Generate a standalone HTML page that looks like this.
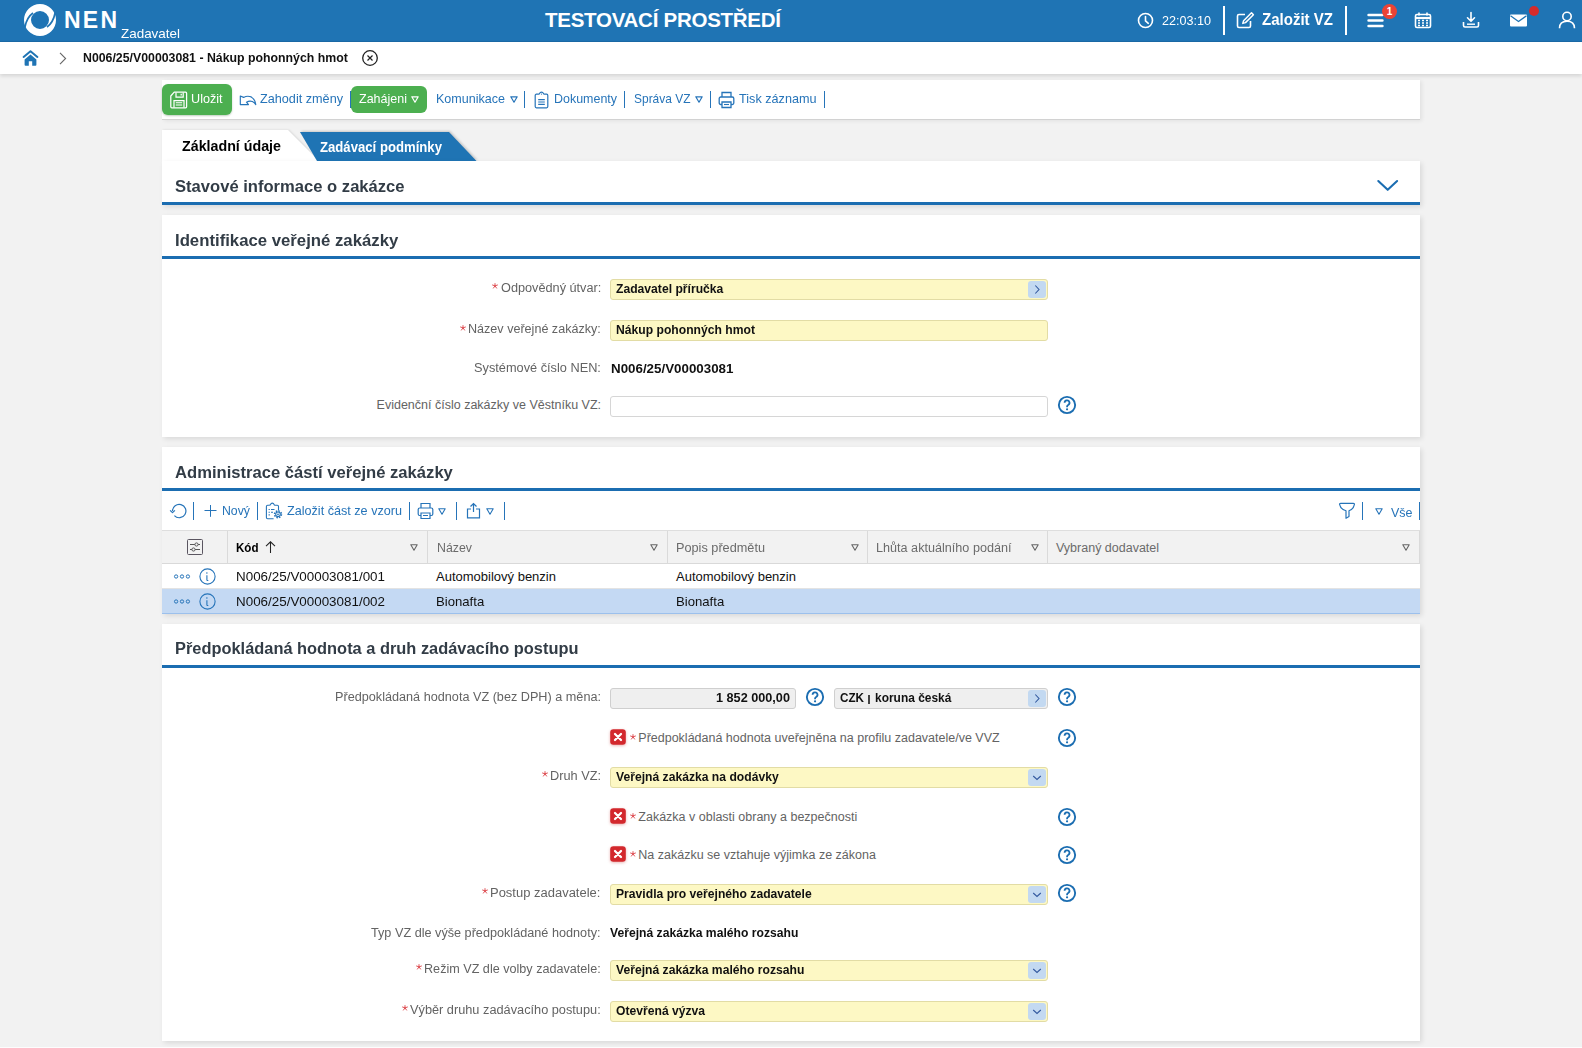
<!DOCTYPE html>
<html><head><meta charset="utf-8"><title>NEN</title>
<style>
html,body{margin:0;padding:0;}
body{width:1582px;height:1048px;overflow:hidden;position:relative;background:#f2f2f2;font-family:"Liberation Sans",sans-serif;}
.t{position:absolute;white-space:nowrap;line-height:1;}
.r{position:absolute;}
svg.r{overflow:visible;}
</style></head><body>
<div class="r" style="left:0px;top:0px;width:1582px;height:42px;background:#1f74b4;"></div>
<div class="r" style="left:0px;top:41px;width:1582px;height:1px;background:#1a6aa6;"></div>
<svg class="r" style="left:22px;top:2px;" width="36" height="36" viewBox="0 0 36 36" fill="none"><circle cx="18" cy="18" r="12.5" stroke="#fff" stroke-width="7"/>
<path d="M11 11 Q4.8 15.2 2.8 25.5" stroke="#1f74b4" stroke-width="1.7"/>
<path d="M25 25 Q31.2 20.8 33.2 10.5" stroke="#1f74b4" stroke-width="1.7"/></svg>
<div class="t" style="left:64.00px;top:8.53px;font-size:23.00px;color:#fff;font-weight:bold;letter-spacing:2.219px;">NEN</div>
<div class="t" style="left:121.00px;top:26.50px;font-size:13.00px;color:#fff;transform:scaleX(1.0334);transform-origin:0 0;">Zadavatel</div>
<div class="t" style="left:545.00px;top:10.45px;font-size:20.50px;color:#fff;font-weight:bold;letter-spacing:-0.262px;">TESTOVACÍ PROSTŘEDÍ</div>
<svg class="r" style="left:1137px;top:12px;" width="17" height="17" viewBox="0 0 17 17" fill="none"><circle cx="8.5" cy="8.5" r="7" stroke="#fff" stroke-width="1.6"/><path d="M8.5 4.5 V8.8 L11.3 11.3" stroke="#fff" stroke-width="1.6" stroke-linecap="round"/></svg>
<div class="t" style="left:1162.00px;top:13.87px;font-size:13.50px;color:#fff;transform:scaleX(0.9324);transform-origin:0 0;">22:03:10</div>
<div class="r" style="left:1223px;top:6px;width:2px;height:29px;background:#fff;"></div>
<svg class="r" style="left:1236px;top:11px;" width="19" height="18" viewBox="0 0 19 18" fill="none"><path d="M9 3.5 H3 a1.5 1.5 0 0 0 -1.5 1.5 V15 a1.5 1.5 0 0 0 1.5 1.5 H13 a1.5 1.5 0 0 0 1.5 -1.5 V10" stroke="#fff" stroke-width="1.6"/><path d="M15.5 1.8 L17.4 3.7 L9.5 11.6 L6.8 12.4 L7.6 9.7 Z" stroke="#fff" stroke-width="1.5" stroke-linejoin="round"/></svg>
<div class="t" style="left:1262.00px;top:11.76px;font-size:16.00px;color:#fff;font-weight:bold;transform:scaleX(0.9397);transform-origin:0 0;">Založit VZ</div>
<div class="r" style="left:1345px;top:6px;width:2px;height:29px;background:#fff;"></div>
<svg class="r" style="left:1366px;top:13px;" width="18" height="15" viewBox="0 0 18 15" fill="none"><path d="M2.6 2 H16.4 M2.6 7.5 H16.4 M2.6 13 H16.4" stroke="#fff" stroke-width="2.6" stroke-linecap="round"/></svg>
<div class="r" style="left:1382px;top:4px;width:15px;height:15px;background:#ea4335;border-radius:50%;"></div>
<div class="t" style="left:1386.72px;top:7.34px;font-size:10.00px;color:#fff;font-weight:bold;">1</div>
<svg class="r" style="left:1414px;top:11px;" width="18" height="18" viewBox="0 0 18 18" fill="none"><rect x="1.5" y="3.5" width="15" height="13" rx="1.5" stroke="#fff" stroke-width="1.6"/><path d="M1.5 7 H16.5" stroke="#fff" stroke-width="2.2"/><path d="M5 1.5 V4.5 M13 1.5 V4.5" stroke="#fff" stroke-width="1.6"/><path d="M4 9.5h2M8 9.5h2M12 9.5h2M4 12h2M8 12h2M12 12h2M4 14.5h2M8 14.5h2M12 14.5h2" stroke="#fff" stroke-width="1.3"/></svg>
<svg class="r" style="left:1462px;top:11px;" width="18" height="18" viewBox="0 0 18 18" fill="none"><path d="M9 1.5 V10 M5.5 6.8 L9 10.3 L12.5 6.8" stroke="#fff" stroke-width="1.6" stroke-linecap="round" stroke-linejoin="round"/><path d="M1.5 11 V14.5 a1.5 1.5 0 0 0 1.5 1.5 H15 a1.5 1.5 0 0 0 1.5 -1.5 V11" stroke="#fff" stroke-width="1.6"/><path d="M5 13.2 H13" stroke="#fff" stroke-width="1.4"/></svg>
<svg class="r" style="left:1509px;top:14px;" width="19" height="13" viewBox="0 0 19 13" fill="none"><path d="M1 1.5 a1 1 0 0 1 1 -1 H17 a1 1 0 0 1 1 1 V11.5 a1 1 0 0 1 -1 1 H2 a1 1 0 0 1 -1 -1 Z" fill="#fff"/><path d="M1.5 1.8 L9.5 7.5 L17.5 1.8" stroke="#1f74b4" stroke-width="1.3"/></svg>
<div class="r" style="left:1529px;top:6px;width:10px;height:10px;background:#d52b2b;border-radius:50%;"></div>
<svg class="r" style="left:1558px;top:11px;" width="18" height="18" viewBox="0 0 18 18" fill="none"><circle cx="9" cy="5.5" r="4.2" stroke="#fff" stroke-width="1.6"/><path d="M1.5 17.2 C1.5 12.5 4.5 10.3 9 10.3 C13.5 10.3 16.5 12.5 16.5 17.2" stroke="#fff" stroke-width="1.6"/></svg>
<div class="r" style="left:0px;top:42px;width:1582px;height:32px;background:#fff;box-shadow:0 2px 4px rgba(0,0,0,0.13);z-index:2;"></div>
<svg class="r" style="left:21.5px;top:49px;z-index:3;" width="17" height="17" viewBox="0 0 17 17" fill="none"><path d="M1.6 7.9 L8.5 2.2 L15.4 7.9" stroke="#1f74b4" stroke-width="2" stroke-linecap="round" stroke-linejoin="round"/><path d="M2.6 10.4 L8.5 5.4 L14.4 10.4 V15.8 a0.9 0.9 0 0 1 -0.9 0.9 H10.2 V12.2 H6.8 V16.7 H3.5 a0.9 0.9 0 0 1 -0.9 -0.9 Z" fill="#1f74b4"/></svg>
<svg class="r" style="left:58px;top:52px;z-index:3;" width="10" height="13" viewBox="0 0 10 13" fill="none"><path d="M2 0.8 L7.6 6.5 L2 12.2" stroke="#666" stroke-width="1.1"/></svg>
<div class="t" style="left:83.00px;top:50.86px;font-size:13.40px;color:#111;font-weight:bold;transform:scaleX(0.9195);transform-origin:0 0;z-index:3;">N006/25/V00003081 - Nákup pohonných hmot</div>
<svg class="r" style="left:361px;top:49px;z-index:3;" width="18" height="18" viewBox="0 0 18 18" fill="none"><circle cx="9" cy="9" r="7.3" stroke="#222" stroke-width="1.3"/><path d="M6.5 6.5 L11.5 11.5 M11.5 6.5 L6.5 11.5" stroke="#222" stroke-width="1.2"/></svg>
<div class="r" style="left:162px;top:80px;width:1258px;height:40px;background:#fff;border-bottom:1px solid #d2d2d2;box-sizing:border-box;box-shadow:2px 1px 4px rgba(0,0,0,0.07);"></div>
<div class="r" style="left:162px;top:84px;width:70px;height:31px;background:#4caf50;border-radius:6px;box-shadow:0 1px 2px rgba(0,60,0,0.25);"></div>
<svg class="r" style="left:170px;top:91px;" width="18" height="18" viewBox="0 0 18 18" fill="none"><path d="M4.2 1.2 H15.6 a1 1 0 0 1 1 1 V15.8 a1 1 0 0 1 -1 1 H1.8 a1 1 0 0 1 -1 -1 V5 Z" stroke="#fff" stroke-width="1.25" stroke-linejoin="round"/><path d="M6 1.5 V6.2 H13.2 V1.5" stroke="#fff" stroke-width="1.2"/><path d="M11.2 2.8 V4.6" stroke="#fff" stroke-width="1.3"/><path d="M4 16.6 V9.6 H14 V16.6" stroke="#fff" stroke-width="1.2"/><path d="M5.8 11.8 H12.2 M5.8 14 H12.2" stroke="#fff" stroke-width="1.1"/></svg>
<div class="t" style="left:191.00px;top:91.60px;font-size:13.00px;color:#fff;transform:scaleX(0.9721);transform-origin:0 0;">Uložit</div>
<svg class="r" style="left:239px;top:91px;" width="18" height="17" viewBox="0 0 18 17" fill="none"><path d="M1.3 5 V13.6 H9.5 L7.5 11.2 Q10.6 9.3 13.4 10.6 Q15.6 11.7 16.8 13.6 Q16.2 8.2 12.2 5.9 Q8.4 4.3 4.6 6.4 Z" stroke="#2674b9" stroke-width="1.15" stroke-linejoin="round"/></svg>
<div class="t" style="left:260.00px;top:92.17px;font-size:13.50px;color:#2674b9;transform:scaleX(0.9374);transform-origin:0 0;">Zahodit změny</div>
<div class="r" style="left:350px;top:91px;width:1.5px;height:17px;background:#2674b9;"></div>
<div class="r" style="left:351px;top:86px;width:76px;height:27px;background:#4caf50;border-radius:6px;"></div>
<div class="t" style="left:359.00px;top:92.17px;font-size:13.50px;color:#fff;transform:scaleX(0.9269);transform-origin:0 0;">Zahájeni</div>
<svg class="r" style="left:411px;top:96px;" width="8" height="7" viewBox="0 0 8 7" fill="none"><path d="M0.8 0.8 H7.2 L4 6.2 Z" stroke="#fff" stroke-width="1.2" stroke-linejoin="round"/></svg>
<div class="t" style="left:436.00px;top:92.17px;font-size:13.50px;color:#2674b9;transform:scaleX(0.9288);transform-origin:0 0;">Komunikace</div>
<svg class="r" style="left:510px;top:96px;" width="8" height="7" viewBox="0 0 8 7" fill="none"><path d="M0.8 0.8 H7.2 L4 6.2 Z" stroke="#2674b9" stroke-width="1.2" stroke-linejoin="round"/></svg>
<div class="r" style="left:524px;top:91px;width:1px;height:17px;background:#2674b9;"></div>
<svg class="r" style="left:534px;top:91px;" width="15" height="18" viewBox="0 0 15 18" fill="none"><path d="M4.6 3.2 H2.4 a1.2 1.2 0 0 0 -1.2 1.2 V15.6 a1.2 1.2 0 0 0 1.2 1.2 H12.6 a1.2 1.2 0 0 0 1.2 -1.2 V4.4 a1.2 1.2 0 0 0 -1.2 -1.2 H10.4 Q9.6 3.2 9.4 2.4 Q8.9 1.1 7.5 1.1 Q6.1 1.1 5.6 2.4 Q5.4 3.2 4.6 3.2 Z" stroke="#2674b9" stroke-width="1.2" stroke-linejoin="round"/><circle cx="7.5" cy="3.1" r="0.6" fill="#2674b9"/><path d="M4.2 8.6 H10.8 M4.2 11 H10.8 M4.2 13.4 H10.8" stroke="#2674b9" stroke-width="1.1"/></svg>
<div class="t" style="left:554.00px;top:92.17px;font-size:13.50px;color:#2674b9;transform:scaleX(0.9227);transform-origin:0 0;">Dokumenty</div>
<div class="r" style="left:624px;top:91px;width:1px;height:17px;background:#2674b9;"></div>
<div class="t" style="left:633.50px;top:92.17px;font-size:13.50px;color:#2674b9;transform:scaleX(0.8859);transform-origin:0 0;">Správa VZ</div>
<svg class="r" style="left:695px;top:96px;" width="8" height="7" viewBox="0 0 8 7" fill="none"><path d="M0.8 0.8 H7.2 L4 6.2 Z" stroke="#2674b9" stroke-width="1.2" stroke-linejoin="round"/></svg>
<div class="r" style="left:710px;top:91px;width:1px;height:17px;background:#2674b9;"></div>
<svg class="r" style="left:718px;top:91px;" width="17" height="18" viewBox="0 0 17 18" fill="none"><path d="M4 6 V1.5 H13 V6" stroke="#2674b9" stroke-width="1.3"/><rect x="1.2" y="6" width="14.6" height="7.5" rx="1.5" stroke="#2674b9" stroke-width="1.3"/><path d="M4 11 V16.5 H13 V11 Z" stroke="#2674b9" stroke-width="1.3" fill="#fff"/><path d="M6 13.5 H11" stroke="#2674b9" stroke-width="1.1"/></svg>
<div class="t" style="left:739.00px;top:92.17px;font-size:13.50px;color:#2674b9;transform:scaleX(0.9363);transform-origin:0 0;">Tisk záznamu</div>
<div class="r" style="left:824px;top:91px;width:1px;height:17px;background:#2674b9;"></div>
<svg class="r" style="left:162px;top:129px;filter:drop-shadow(1px 0 1px rgba(0,0,0,0.12));" width="160" height="33" viewBox="0 0 160 33" fill="none"><path d="M0 1 H126 L157.5 32.5 H0 Z" fill="#fff"/></svg>
<div class="t" style="left:182.00px;top:138.73px;font-size:14.50px;color:#000;font-weight:bold;transform:scaleX(0.9829);transform-origin:0 0;">Základní údaje</div>
<svg class="r" style="left:298px;top:132px;filter:drop-shadow(1px -1px 1px rgba(0,0,0,0.18));" width="182" height="29" viewBox="0 0 182 29" fill="none"><path d="M2 0 H151 L178.5 29 H19 Z" fill="#1f74b4"/></svg>
<div class="t" style="left:319.50px;top:140.52px;font-size:13.80px;color:#fff;font-weight:bold;transform:scaleX(0.9526);transform-origin:0 0;">Zadávací podmínky</div>
<div class="r" style="left:162px;top:161px;width:1258px;height:44px;background:#fff;box-shadow:2px 2px 5px rgba(0,0,0,0.10);"></div>
<div class="r" style="left:162px;top:202px;width:1258px;height:3px;background:#1b6db1;"></div>
<div class="t" style="left:174.50px;top:178.17px;font-size:17.40px;color:#323c46;font-weight:bold;transform:scaleX(0.9538);transform-origin:0 0;">Stavové informace o zakázce</div>
<svg class="r" style="left:1376px;top:179px;" width="23" height="14" viewBox="0 0 23 14" fill="none"><path d="M2.3 2 L11.7 10.8 L21.1 2" stroke="#1b6db1" stroke-width="2.1" stroke-linecap="round" stroke-linejoin="round"/></svg>
<div class="r" style="left:162px;top:215px;width:1258px;height:222px;background:#fff;box-shadow:2px 2px 5px rgba(0,0,0,0.10);"></div>
<div class="r" style="left:162px;top:256px;width:1258px;height:3px;background:#1b6db1;"></div>
<div class="t" style="left:174.50px;top:231.97px;font-size:17.40px;color:#323c46;font-weight:bold;transform:scaleX(0.9624);transform-origin:0 0;">Identifikace veřejné zakázky</div>
<div class="r" style="left:162px;top:447px;width:1258px;height:167px;background:#fff;box-shadow:2px 2px 5px rgba(0,0,0,0.10);"></div>
<div class="r" style="left:162px;top:488px;width:1258px;height:3px;background:#1b6db1;"></div>
<div class="t" style="left:174.50px;top:463.77px;font-size:17.40px;color:#323c46;font-weight:bold;transform:scaleX(0.9549);transform-origin:0 0;">Administrace částí veřejné zakázky</div>
<div class="r" style="left:162px;top:624px;width:1258px;height:417px;background:#fff;box-shadow:2px 2px 5px rgba(0,0,0,0.10);"></div>
<div class="r" style="left:162px;top:665px;width:1258px;height:3px;background:#1b6db1;"></div>
<div class="t" style="left:174.50px;top:640.47px;font-size:17.40px;color:#323c46;font-weight:bold;transform:scaleX(0.9426);transform-origin:0 0;">Předpokládaná hodnota a druh zadávacího postupu</div>
<div class="t" style="left:500.50px;top:281.52px;font-size:12.50px;color:#636363;transform:scaleX(1.0165);transform-origin:0 0;">Odpovědný útvar:</div>
<svg class="r" style="left:492.3999999999999px;top:282.90000000000003px;" width="6" height="6" viewBox="0 0 6 6" fill="none"><path d="M3 2.9 V0.2 M3 2.9 L0.2 1.9 M3 2.9 L5.8 1.9 M3 2.9 L1.2 5.4 M3 2.9 L4.8 5.4" stroke="#d9343a" stroke-width="0.85"/></svg>
<div class="r" style="left:610px;top:279px;width:438px;height:21px;background:#fdf8c4;border:1px solid #e2dca5;border-radius:3px;box-sizing:border-box;"></div>
<div class="r" style="left:1028px;top:281px;width:18px;height:17px;background:#c3d9f1;border-radius:3px;"></div>
<svg class="r" style="left:1028px;top:281px;" width="18" height="17" viewBox="0 0 18 17" fill="none"><path d="M7.3 4.5 L11 8.5 L7.3 12.5" stroke="#33599f" stroke-width="1.1"/></svg>
<div class="t" style="left:615.50px;top:283.43px;font-size:12.60px;color:#111;font-weight:bold;transform:scaleX(0.9643);transform-origin:0 0;">Zadavatel příručka</div>
<div class="t" style="left:468.00px;top:323.42px;font-size:12.50px;color:#636363;transform:scaleX(1.0060);transform-origin:0 0;">Název veřejné zakázky:</div>
<svg class="r" style="left:459.8999999999999px;top:324.8px;" width="6" height="6" viewBox="0 0 6 6" fill="none"><path d="M3 2.9 V0.2 M3 2.9 L0.2 1.9 M3 2.9 L5.8 1.9 M3 2.9 L1.2 5.4 M3 2.9 L4.8 5.4" stroke="#d9343a" stroke-width="0.85"/></svg>
<div class="r" style="left:610px;top:320px;width:438px;height:21px;background:#fdf8c4;border:1px solid #e2dca5;border-radius:3px;box-sizing:border-box;"></div>
<div class="t" style="left:615.50px;top:324.43px;font-size:12.60px;color:#111;font-weight:bold;transform:scaleX(0.9643);transform-origin:0 0;">Nákup pohonných hmot</div>
<div class="t" style="left:473.90px;top:362.42px;font-size:12.50px;color:#636363;transform:scaleX(1.0206);transform-origin:0 0;">Systémové číslo NEN:</div>
<div class="t" style="left:610.50px;top:362.63px;font-size:12.60px;color:#111;font-weight:bold;transform:scaleX(1.0596);transform-origin:0 0;">N006/25/V00003081</div>
<div class="t" style="left:376.60px;top:399.42px;font-size:12.50px;color:#636363;">Evidenční číslo zakázky ve Věstníku VZ:</div>
<div class="r" style="left:610px;top:396px;width:438px;height:21px;background:#fff;border:1px solid #d6d6d6;border-radius:3px;box-sizing:border-box;"></div>
<svg class="r" style="left:1057px;top:394.90000000000003px;" width="20" height="20" viewBox="0 0 20 20" fill="none"><circle cx="10" cy="10" r="8.15" stroke="#1b6db1" stroke-width="1.9"/><path d="M7.6 7.8 a2.45 2.45 0 1 1 3.55 2.2 c-0.78 0.4 -1.1 0.88 -1.1 1.75 V12.2" stroke="#1b6db1" stroke-width="1.8" fill="none"/><circle cx="10.05" cy="14.3" r="1.1" fill="#1b6db1"/></svg>
<svg class="r" style="left:169px;top:503px;" width="18" height="17" viewBox="0 0 18 17" fill="none"><path d="M3.5 8 A6.7 6.7 0 1 1 5.4 12.7" stroke="#2674b9" stroke-width="1.2"/><path d="M1.1 7.3 L3.5 9.7 L5.9 7.3" stroke="#2674b9" stroke-width="1.2" stroke-linejoin="round"/></svg>
<div class="r" style="left:193px;top:502px;width:1px;height:18px;background:#2674b9;"></div>
<svg class="r" style="left:203px;top:504px;" width="14" height="14" viewBox="0 0 14 14" fill="none"><path d="M7.5 1 V12.8 M1.5 6.5 H13.5" stroke="#2674b9" stroke-width="1"/></svg>
<div class="t" style="left:222.00px;top:503.70px;font-size:13.00px;color:#2674b9;transform:scaleX(0.9453);transform-origin:0 0;">Nový</div>
<div class="r" style="left:257px;top:502px;width:1px;height:18px;background:#2674b9;"></div>
<svg class="r" style="left:265px;top:502px;" width="18" height="18" viewBox="0 0 18 18" fill="none"><path d="M4.2 3.2 H2.6 a1.2 1.2 0 0 0 -1.2 1.2 V15.6 a1.2 1.2 0 0 0 1.2 1.2 H8.6 M13.5 8.5 V4.4 a1.2 1.2 0 0 0 -1.2 -1.2 H10 Q9.2 3.2 9 2.4 Q8.6 1.1 7.3 1.1 Q6 1.1 5.6 2.4 Q5.4 3.2 4.2 3.2" stroke="#2674b9" stroke-width="1.1" stroke-linejoin="round"/><path d="M3.6 7.5 H4.8 M6 7.5 H9.5 M3.6 10.2 H4.8 M6 10.2 H8 M3.6 12.9 H4.8" stroke="#2674b9" stroke-width="1.1"/><circle cx="13" cy="12.3" r="3.4" stroke="#2674b9" stroke-width="1.6" stroke-dasharray="1.5 1.17" fill="#fff"/><circle cx="13" cy="12.3" r="2.3" stroke="#2674b9" stroke-width="1.05" fill="#fff"/><circle cx="13" cy="12.3" r="0.9" fill="#2674b9"/></svg>
<div class="t" style="left:286.50px;top:503.50px;font-size:13.00px;color:#2674b9;transform:scaleX(0.9706);transform-origin:0 0;">Založit část ze vzoru</div>
<div class="r" style="left:409px;top:502px;width:1px;height:18px;background:#2674b9;"></div>
<svg class="r" style="left:417px;top:502px;" width="17" height="18" viewBox="0 0 17 18" fill="none"><path d="M4 6 V1.5 H13 V6" stroke="#2674b9" stroke-width="1.2"/><rect x="1.2" y="6" width="14.6" height="7.5" rx="1.5" stroke="#2674b9" stroke-width="1.2"/><path d="M4 11 V16.5 H13 V11 Z" stroke="#2674b9" stroke-width="1.2" fill="#fff"/><path d="M6 13.5 H11" stroke="#2674b9" stroke-width="1"/></svg>
<svg class="r" style="left:438px;top:508px;" width="8" height="7" viewBox="0 0 8 7" fill="none"><path d="M0.8 0.8 H7.2 L4 6.2 Z" stroke="#2674b9" stroke-width="1.1" stroke-linejoin="round"/></svg>
<div class="r" style="left:456px;top:502px;width:1px;height:18px;background:#2674b9;"></div>
<svg class="r" style="left:466px;top:502px;" width="15" height="17" viewBox="0 0 15 17" fill="none"><path d="M7.5 1.5 V10 M4.5 4.5 L7.5 1.5 L10.5 4.5" stroke="#2674b9" stroke-width="1.2"/><path d="M5 7 H1.5 V15.8 H13.5 V7 H10" stroke="#2674b9" stroke-width="1.2"/></svg>
<svg class="r" style="left:486px;top:508px;" width="8" height="7" viewBox="0 0 8 7" fill="none"><path d="M0.8 0.8 H7.2 L4 6.2 Z" stroke="#2674b9" stroke-width="1.1" stroke-linejoin="round"/></svg>
<div class="r" style="left:504px;top:502px;width:1px;height:18px;background:#2674b9;"></div>
<svg class="r" style="left:1338px;top:502px;" width="18" height="18" viewBox="0 0 18 18" fill="none"><path d="M1.6 2.4 Q1.4 1.3 2.6 1.3 H15.4 Q16.6 1.3 16.4 2.4 Q15.6 7 11 8.8 V14.6 L8 16.3 V8.8 Q2.4 7 1.6 2.4 Z" stroke="#2674b9" stroke-width="1.2" stroke-linejoin="round"/></svg>
<div class="r" style="left:1362px;top:502px;width:1px;height:18px;background:#2674b9;"></div>
<svg class="r" style="left:1375px;top:508px;" width="8" height="7" viewBox="0 0 8 7" fill="none"><path d="M0.8 0.8 H7.2 L4 6.2 Z" stroke="#2674b9" stroke-width="1.1" stroke-linejoin="round"/></svg>
<div class="t" style="left:1390.50px;top:505.50px;font-size:13.00px;color:#2674b9;transform:scaleX(0.9598);transform-origin:0 0;">Vše</div>
<div class="r" style="left:1419px;top:502px;width:1px;height:18px;background:#2674b9;"></div>
<div class="r" style="left:162px;top:530px;width:1258px;height:34px;background:#f2f2f2;border-top:1px solid #dedede;border-bottom:1px solid #d9d9d9;box-sizing:border-box;"></div>
<div class="r" style="left:227px;top:531px;width:1px;height:32px;background:#dadada;"></div>
<div class="r" style="left:427px;top:531px;width:1px;height:32px;background:#dadada;"></div>
<div class="r" style="left:667px;top:531px;width:1px;height:32px;background:#dadada;"></div>
<div class="r" style="left:867px;top:531px;width:1px;height:32px;background:#dadada;"></div>
<div class="r" style="left:1047px;top:531px;width:1px;height:32px;background:#dadada;"></div>
<div class="r" style="left:1419px;top:531px;width:1px;height:32px;background:#dadada;"></div>
<svg class="r" style="left:186px;top:538px;" width="18" height="18" viewBox="0 0 18 18" fill="none"><rect x="1.5" y="1.5" width="15" height="15" rx="1" stroke="#5a5560" stroke-width="1"/><path d="M4 6.5 H14 M4 11.5 H14" stroke="#555" stroke-width="1.1"/><circle cx="10.5" cy="6.5" r="1.6" fill="#f2f2f2" stroke="#555" stroke-width="1"/><circle cx="7.5" cy="11.5" r="1.6" fill="#f2f2f2" stroke="#555" stroke-width="1"/></svg>
<div class="t" style="left:236.30px;top:540.74px;font-size:13.30px;color:#000;font-weight:bold;transform:scaleX(0.8703);transform-origin:0 0;">Kód</div>
<svg class="r" style="left:263px;top:540px;" width="14" height="14" viewBox="0 0 14 14" fill="none"><path d="M7.5 13 V1.8 M3 6.2 L7.5 1.8 L12 6.2" stroke="#222" stroke-width="1.05"/></svg>
<svg class="r" style="left:410px;top:544px;" width="8" height="7" viewBox="0 0 8 7" fill="none"><path d="M0.8 0.8 H7.2 L4 6.2 Z" stroke="#666" stroke-width="1.1" stroke-linejoin="round"/></svg>
<div class="t" style="left:436.50px;top:541.62px;font-size:12.50px;color:#6b6b6b;transform:scaleX(0.9878);transform-origin:0 0;">Název</div>
<svg class="r" style="left:650px;top:544px;" width="8" height="7" viewBox="0 0 8 7" fill="none"><path d="M0.8 0.8 H7.2 L4 6.2 Z" stroke="#666" stroke-width="1.1" stroke-linejoin="round"/></svg>
<div class="t" style="left:676.20px;top:541.62px;font-size:12.50px;color:#6b6b6b;transform:scaleX(1.0165);transform-origin:0 0;">Popis předmětu</div>
<svg class="r" style="left:850.5px;top:544px;" width="8" height="7" viewBox="0 0 8 7" fill="none"><path d="M0.8 0.8 H7.2 L4 6.2 Z" stroke="#666" stroke-width="1.1" stroke-linejoin="round"/></svg>
<div class="t" style="left:876.00px;top:541.62px;font-size:12.50px;color:#6b6b6b;transform:scaleX(1.0101);transform-origin:0 0;">Lhůta aktuálního podání</div>
<svg class="r" style="left:1030.5px;top:544px;" width="8" height="7" viewBox="0 0 8 7" fill="none"><path d="M0.8 0.8 H7.2 L4 6.2 Z" stroke="#666" stroke-width="1.1" stroke-linejoin="round"/></svg>
<div class="t" style="left:1056.00px;top:541.62px;font-size:12.50px;color:#6b6b6b;">Vybraný dodavatel</div>
<svg class="r" style="left:1402px;top:544px;" width="8" height="7" viewBox="0 0 8 7" fill="none"><path d="M0.8 0.8 H7.2 L4 6.2 Z" stroke="#666" stroke-width="1.1" stroke-linejoin="round"/></svg>
<div class="r" style="left:162px;top:588px;width:1258px;height:1px;background:#e3e3e3;"></div>
<div class="r" style="left:162px;top:589px;width:1258px;height:25px;background:#c4d9f3;border-bottom:1px solid #9cc0ec;box-sizing:border-box;"></div>
<svg class="r" style="left:173px;top:573.2px;" width="18" height="7" viewBox="0 0 18 7" fill="none"><circle cx="3.1" cy="3.5" r="1.65" stroke="#2674b9" stroke-width="1"/><circle cx="9" cy="3.5" r="1.65" stroke="#2674b9" stroke-width="1"/><circle cx="14.9" cy="3.5" r="1.65" stroke="#2674b9" stroke-width="1"/></svg>
<svg class="r" style="left:199px;top:567.7px;" width="17" height="17" viewBox="0 0 17 17" fill="none"><circle cx="8.5" cy="8.5" r="7.6" stroke="#2674b9" stroke-width="1.1"/><path d="M7.9 7.3 V11.7 Q7.9 12.9 9.3 12.4" stroke="#2674b9" stroke-width="1.1" fill="none"/><circle cx="7.9" cy="5" r="0.75" fill="#2674b9"/></svg>
<div class="t" style="left:235.80px;top:570.00px;font-size:13.00px;color:#111;transform:scaleX(1.0306);transform-origin:0 0;">N006/25/V00003081/001</div>
<div class="t" style="left:436.00px;top:570.00px;font-size:13.00px;color:#111;">Automobilový benzin</div>
<div class="t" style="left:676.00px;top:570.00px;font-size:13.00px;color:#111;">Automobilový benzin</div>
<svg class="r" style="left:173px;top:598.2px;" width="18" height="7" viewBox="0 0 18 7" fill="none"><circle cx="3.1" cy="3.5" r="1.65" stroke="#2674b9" stroke-width="1"/><circle cx="9" cy="3.5" r="1.65" stroke="#2674b9" stroke-width="1"/><circle cx="14.9" cy="3.5" r="1.65" stroke="#2674b9" stroke-width="1"/></svg>
<svg class="r" style="left:199px;top:592.7px;" width="17" height="17" viewBox="0 0 17 17" fill="none"><circle cx="8.5" cy="8.5" r="7.6" stroke="#2674b9" stroke-width="1.1"/><path d="M7.9 7.3 V11.7 Q7.9 12.9 9.3 12.4" stroke="#2674b9" stroke-width="1.1" fill="none"/><circle cx="7.9" cy="5" r="0.75" fill="#2674b9"/></svg>
<div class="t" style="left:235.80px;top:595.00px;font-size:13.00px;color:#111;transform:scaleX(1.0306);transform-origin:0 0;">N006/25/V00003081/002</div>
<div class="t" style="left:436.00px;top:595.00px;font-size:13.00px;color:#111;transform:scaleX(1.0104);transform-origin:0 0;">Bionafta</div>
<div class="t" style="left:676.00px;top:595.00px;font-size:13.00px;color:#111;transform:scaleX(1.0104);transform-origin:0 0;">Bionafta</div>
<div class="t" style="left:334.80px;top:690.82px;font-size:12.50px;color:#636363;transform:scaleX(1.0127);transform-origin:0 0;">Předpokládaná hodnota VZ (bez DPH) a měna:</div>
<div class="r" style="left:610px;top:688px;width:186px;height:21px;background:#efefef;border:1px solid #cfcfcf;border-radius:3px;box-sizing:border-box;"></div>
<div class="t" style="left:716.00px;top:692.43px;font-size:12.60px;color:#111;font-weight:bold;transform:scaleX(1.0058);transform-origin:0 0;">1 852 000,00</div>
<svg class="r" style="left:805px;top:687.1px;" width="20" height="20" viewBox="0 0 20 20" fill="none"><circle cx="10" cy="10" r="8.15" stroke="#1b6db1" stroke-width="1.9"/><path d="M7.6 7.8 a2.45 2.45 0 1 1 3.55 2.2 c-0.78 0.4 -1.1 0.88 -1.1 1.75 V12.2" stroke="#1b6db1" stroke-width="1.8" fill="none"/><circle cx="10.05" cy="14.3" r="1.1" fill="#1b6db1"/></svg>
<div class="r" style="left:834px;top:688px;width:214px;height:21px;background:#efefef;border:1px solid #cfcfcf;border-radius:3px;box-sizing:border-box;"></div>
<div class="r" style="left:1028px;top:690px;width:18px;height:17px;background:#c3d9f1;border-radius:3px;"></div>
<svg class="r" style="left:1028px;top:690px;" width="18" height="17" viewBox="0 0 18 17" fill="none"><path d="M7.3 4.5 L11 8.5 L7.3 12.5" stroke="#33599f" stroke-width="1.1"/></svg>
<div class="t" style="left:839.50px;top:692.43px;font-size:12.60px;color:#111;font-weight:bold;transform:scaleX(0.9268);transform-origin:0 0;">CZK</div>
<div class="r" style="left:868px;top:694.5px;width:1.6px;height:9px;background:#444;"></div>
<div class="t" style="left:874.80px;top:692.43px;font-size:12.60px;color:#111;font-weight:bold;transform:scaleX(0.9485);transform-origin:0 0;">koruna česká</div>
<svg class="r" style="left:1057px;top:686.6px;" width="20" height="20" viewBox="0 0 20 20" fill="none"><circle cx="10" cy="10" r="8.15" stroke="#1b6db1" stroke-width="1.9"/><path d="M7.6 7.8 a2.45 2.45 0 1 1 3.55 2.2 c-0.78 0.4 -1.1 0.88 -1.1 1.75 V12.2" stroke="#1b6db1" stroke-width="1.8" fill="none"/><circle cx="10.05" cy="14.3" r="1.1" fill="#1b6db1"/></svg>
<svg class="r" style="left:610px;top:728.5px;filter:drop-shadow(0 1px 1.5px rgba(180,0,0,0.3));" width="16" height="16" viewBox="0 0 16 16" fill="none"><rect x="0.2" y="0.2" width="15.6" height="15.6" rx="3.2" fill="#d3282d"/><path d="M5 5 L11 11 M11 5 L5 11" stroke="#fff" stroke-width="2.3" stroke-linecap="round"/></svg>
<svg class="r" style="left:630px;top:733.9px;" width="6" height="6" viewBox="0 0 6 6" fill="none"><path d="M3 2.9 V0.2 M3 2.9 L0.2 1.9 M3 2.9 L5.8 1.9 M3 2.9 L1.2 5.4 M3 2.9 L4.8 5.4" stroke="#d9343a" stroke-width="0.85"/></svg>
<div class="t" style="left:638.30px;top:731.92px;font-size:12.50px;color:#636363;">Předpokládaná hodnota uveřejněna na profilu zadavatele/ve VVZ</div>
<svg class="r" style="left:1057px;top:727.6px;" width="20" height="20" viewBox="0 0 20 20" fill="none"><circle cx="10" cy="10" r="8.15" stroke="#1b6db1" stroke-width="1.9"/><path d="M7.6 7.8 a2.45 2.45 0 1 1 3.55 2.2 c-0.78 0.4 -1.1 0.88 -1.1 1.75 V12.2" stroke="#1b6db1" stroke-width="1.8" fill="none"/><circle cx="10.05" cy="14.3" r="1.1" fill="#1b6db1"/></svg>
<div class="t" style="left:549.80px;top:770.02px;font-size:12.50px;color:#636363;transform:scaleX(1.0197);transform-origin:0 0;">Druh VZ:</div>
<svg class="r" style="left:541.6999999999999px;top:771.4px;" width="6" height="6" viewBox="0 0 6 6" fill="none"><path d="M3 2.9 V0.2 M3 2.9 L0.2 1.9 M3 2.9 L5.8 1.9 M3 2.9 L1.2 5.4 M3 2.9 L4.8 5.4" stroke="#d9343a" stroke-width="0.85"/></svg>
<div class="r" style="left:610px;top:767px;width:438px;height:21px;background:#fdf8c4;border:1px solid #e2dca5;border-radius:3px;box-sizing:border-box;"></div>
<div class="r" style="left:1028px;top:769px;width:18px;height:17px;background:#c3d9f1;border-radius:3px;"></div>
<svg class="r" style="left:1028px;top:769px;" width="18" height="17" viewBox="0 0 18 17" fill="none"><path d="M5.2 7 L9 10.5 L12.8 7" stroke="#33599f" stroke-width="1.1"/></svg>
<div class="t" style="left:615.50px;top:771.43px;font-size:12.60px;color:#111;font-weight:bold;transform:scaleX(0.9643);transform-origin:0 0;">Veřejná zakázka na dodávky</div>
<svg class="r" style="left:610px;top:807.5px;filter:drop-shadow(0 1px 1.5px rgba(180,0,0,0.3));" width="16" height="16" viewBox="0 0 16 16" fill="none"><rect x="0.2" y="0.2" width="15.6" height="15.6" rx="3.2" fill="#d3282d"/><path d="M5 5 L11 11 M11 5 L5 11" stroke="#fff" stroke-width="2.3" stroke-linecap="round"/></svg>
<svg class="r" style="left:630px;top:812.9px;" width="6" height="6" viewBox="0 0 6 6" fill="none"><path d="M3 2.9 V0.2 M3 2.9 L0.2 1.9 M3 2.9 L5.8 1.9 M3 2.9 L1.2 5.4 M3 2.9 L4.8 5.4" stroke="#d9343a" stroke-width="0.85"/></svg>
<div class="t" style="left:638.30px;top:810.92px;font-size:12.50px;color:#636363;">Zakázka v oblasti obrany a bezpečnosti</div>
<svg class="r" style="left:1057px;top:806.6px;" width="20" height="20" viewBox="0 0 20 20" fill="none"><circle cx="10" cy="10" r="8.15" stroke="#1b6db1" stroke-width="1.9"/><path d="M7.6 7.8 a2.45 2.45 0 1 1 3.55 2.2 c-0.78 0.4 -1.1 0.88 -1.1 1.75 V12.2" stroke="#1b6db1" stroke-width="1.8" fill="none"/><circle cx="10.05" cy="14.3" r="1.1" fill="#1b6db1"/></svg>
<svg class="r" style="left:610px;top:845.5px;filter:drop-shadow(0 1px 1.5px rgba(180,0,0,0.3));" width="16" height="16" viewBox="0 0 16 16" fill="none"><rect x="0.2" y="0.2" width="15.6" height="15.6" rx="3.2" fill="#d3282d"/><path d="M5 5 L11 11 M11 5 L5 11" stroke="#fff" stroke-width="2.3" stroke-linecap="round"/></svg>
<svg class="r" style="left:630px;top:850.9px;" width="6" height="6" viewBox="0 0 6 6" fill="none"><path d="M3 2.9 V0.2 M3 2.9 L0.2 1.9 M3 2.9 L5.8 1.9 M3 2.9 L1.2 5.4 M3 2.9 L4.8 5.4" stroke="#d9343a" stroke-width="0.85"/></svg>
<div class="t" style="left:638.30px;top:848.92px;font-size:12.50px;color:#636363;">Na zakázku se vztahuje výjimka ze zákona</div>
<svg class="r" style="left:1057px;top:844.6px;" width="20" height="20" viewBox="0 0 20 20" fill="none"><circle cx="10" cy="10" r="8.15" stroke="#1b6db1" stroke-width="1.9"/><path d="M7.6 7.8 a2.45 2.45 0 1 1 3.55 2.2 c-0.78 0.4 -1.1 0.88 -1.1 1.75 V12.2" stroke="#1b6db1" stroke-width="1.8" fill="none"/><circle cx="10.05" cy="14.3" r="1.1" fill="#1b6db1"/></svg>
<div class="t" style="left:490.40px;top:886.62px;font-size:12.50px;color:#636363;transform:scaleX(1.0383);transform-origin:0 0;">Postup zadavatele:</div>
<svg class="r" style="left:482.29999999999995px;top:888.0px;" width="6" height="6" viewBox="0 0 6 6" fill="none"><path d="M3 2.9 V0.2 M3 2.9 L0.2 1.9 M3 2.9 L5.8 1.9 M3 2.9 L1.2 5.4 M3 2.9 L4.8 5.4" stroke="#d9343a" stroke-width="0.85"/></svg>
<div class="r" style="left:610px;top:884px;width:438px;height:21px;background:#fdf8c4;border:1px solid #e2dca5;border-radius:3px;box-sizing:border-box;"></div>
<div class="r" style="left:1028px;top:886px;width:18px;height:17px;background:#c3d9f1;border-radius:3px;"></div>
<svg class="r" style="left:1028px;top:886px;" width="18" height="17" viewBox="0 0 18 17" fill="none"><path d="M5.2 7 L9 10.5 L12.8 7" stroke="#33599f" stroke-width="1.1"/></svg>
<div class="t" style="left:615.50px;top:888.03px;font-size:12.60px;color:#111;font-weight:bold;transform:scaleX(0.9643);transform-origin:0 0;">Pravidla pro veřejného zadavatele</div>
<svg class="r" style="left:1057px;top:882.6px;" width="20" height="20" viewBox="0 0 20 20" fill="none"><circle cx="10" cy="10" r="8.15" stroke="#1b6db1" stroke-width="1.9"/><path d="M7.6 7.8 a2.45 2.45 0 1 1 3.55 2.2 c-0.78 0.4 -1.1 0.88 -1.1 1.75 V12.2" stroke="#1b6db1" stroke-width="1.8" fill="none"/><circle cx="10.05" cy="14.3" r="1.1" fill="#1b6db1"/></svg>
<div class="t" style="left:371.30px;top:926.82px;font-size:12.50px;color:#636363;transform:scaleX(1.0131);transform-origin:0 0;">Typ VZ dle výše předpokládané hodnoty:</div>
<div class="t" style="left:609.80px;top:926.93px;font-size:12.60px;color:#111;font-weight:bold;transform:scaleX(0.9643);transform-origin:0 0;">Veřejná zakázka malého rozsahu</div>
<div class="t" style="left:424.10px;top:962.62px;font-size:12.50px;color:#636363;transform:scaleX(1.0092);transform-origin:0 0;">Režim VZ dle volby zadavatele:</div>
<svg class="r" style="left:415.9999999999999px;top:964.0px;" width="6" height="6" viewBox="0 0 6 6" fill="none"><path d="M3 2.9 V0.2 M3 2.9 L0.2 1.9 M3 2.9 L5.8 1.9 M3 2.9 L1.2 5.4 M3 2.9 L4.8 5.4" stroke="#d9343a" stroke-width="0.85"/></svg>
<div class="r" style="left:610px;top:960px;width:438px;height:21px;background:#fdf8c4;border:1px solid #e2dca5;border-radius:3px;box-sizing:border-box;"></div>
<div class="r" style="left:1028px;top:962px;width:18px;height:17px;background:#c3d9f1;border-radius:3px;"></div>
<svg class="r" style="left:1028px;top:962px;" width="18" height="17" viewBox="0 0 18 17" fill="none"><path d="M5.2 7 L9 10.5 L12.8 7" stroke="#33599f" stroke-width="1.1"/></svg>
<div class="t" style="left:615.50px;top:964.03px;font-size:12.60px;color:#111;font-weight:bold;transform:scaleX(0.9643);transform-origin:0 0;">Veřejná zakázka malého rozsahu</div>
<div class="t" style="left:410.10px;top:1003.62px;font-size:12.50px;color:#636363;transform:scaleX(1.0201);transform-origin:0 0;">Výběr druhu zadávacího postupu:</div>
<svg class="r" style="left:401.9999999999999px;top:1005.0px;" width="6" height="6" viewBox="0 0 6 6" fill="none"><path d="M3 2.9 V0.2 M3 2.9 L0.2 1.9 M3 2.9 L5.8 1.9 M3 2.9 L1.2 5.4 M3 2.9 L4.8 5.4" stroke="#d9343a" stroke-width="0.85"/></svg>
<div class="r" style="left:610px;top:1001px;width:438px;height:21px;background:#fdf8c4;border:1px solid #e2dca5;border-radius:3px;box-sizing:border-box;"></div>
<div class="r" style="left:1028px;top:1003px;width:18px;height:17px;background:#c3d9f1;border-radius:3px;"></div>
<svg class="r" style="left:1028px;top:1003px;" width="18" height="17" viewBox="0 0 18 17" fill="none"><path d="M5.2 7 L9 10.5 L12.8 7" stroke="#33599f" stroke-width="1.1"/></svg>
<div class="t" style="left:615.50px;top:1005.03px;font-size:12.60px;color:#111;font-weight:bold;transform:scaleX(0.9643);transform-origin:0 0;">Otevřená výzva</div>
<div class="r" style="left:0px;top:1047px;width:1582px;height:1px;background:#fdfdfd;"></div>
</body></html>
